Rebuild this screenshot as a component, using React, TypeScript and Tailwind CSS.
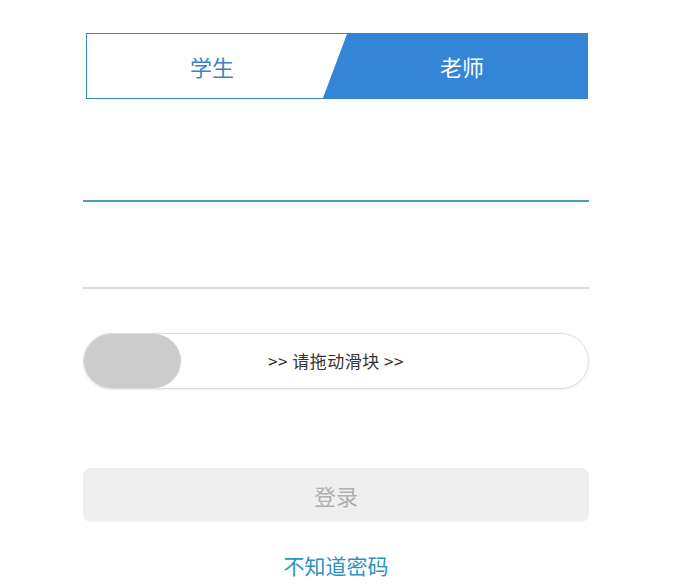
import React from "react";

export default function App() {
  return (
    <div
      className="w-[700px] h-[585px] bg-white overflow-hidden"
      style={{ fontFamily: '"Noto Sans CJK SC", "Noto Sans", sans-serif' }}
    >
      <div className="ml-[83px] w-[506px] pt-[33px] flex flex-col">
        {/* tabs */}
        <div className="ml-[3px] w-[502px] h-[66px] border border-[#3a84cc] flex overflow-hidden">
          <div className="w-[251px] h-full flex items-center justify-center text-[22px] text-[#3d82c8]">
            学生
          </div>
          <div className="ml-[-14px] w-[265px] h-full pl-[14px] flex items-center justify-center bg-[#3385d6] text-white text-[22px] [clip-path:polygon(24px_0,100%_0,100%_100%,0_100%)]">
            老师
          </div>
        </div>

        {/* account input */}
        <div className="h-[103px] border-b-2 border-[#4b9bc0]" />
        {/* password input */}
        <div className="h-[87px] border-b-2 border-[#dcdcdc]" />

        {/* slider */}
        <div className="mt-[44px] h-[56px] rounded-full border border-[#dcdcdc] shadow-[0_1px_2px_rgba(0,0,0,0.08)] flex items-center relative">
          <div className="w-[97px] h-[54px] rounded-full bg-[#cccccc] shrink-0" />
          <div className="flex-1 pr-[97px] text-center text-[17px] text-[#333] tracking-[0.5px]">
            &gt;&gt; 请拖动滑块 &gt;&gt;
          </div>
        </div>

        {/* login button */}
        <div className="mt-[79px] h-[54px] rounded-[8px] bg-[#efefef] flex items-center justify-center text-[22px] text-[#b0b0b0]">
          登录
        </div>

        {/* link */}
        <div className="mt-[30px] h-[28px] flex items-center justify-center text-[21px] text-[#2b93be]">
          不知道密码
        </div>
      </div>
    </div>
  );
}
